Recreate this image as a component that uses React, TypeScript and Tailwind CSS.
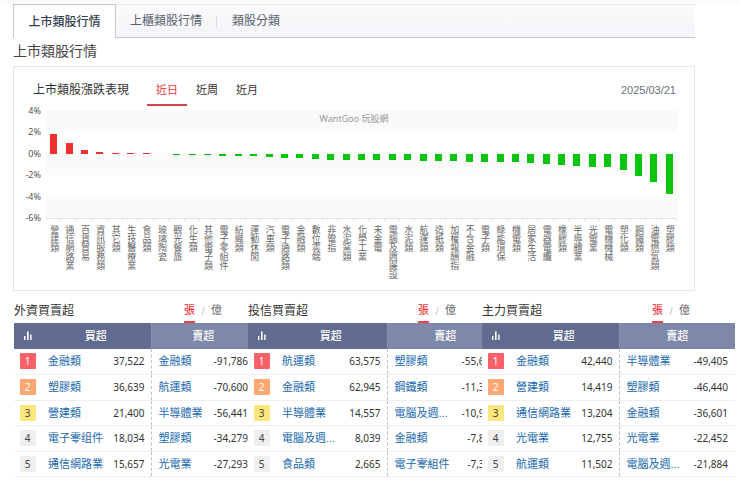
import React, { useState } from "react";
import clsx from "clsx";

const SECTORS: [string, number][] = [
  ["營建類", 1.82],
  ["通信網路業", 1.02],
  ["百貨貿易", 0.34],
  ["資訊服務類", 0.23],
  ["其它類", 0.12],
  ["生技醫療業", 0.07],
  ["食品類", 0.06],
  ["玻璃陶瓷", 0],
  ["觀光餐旅", -0.07],
  ["化生類", -0.12],
  ["其他電子類", -0.13],
  ["電子零組件", -0.14],
  ["紡織類", -0.22],
  ["運動休閒", -0.23],
  ["汽車類", -0.28],
  ["電子通路類", -0.35],
  ["金融類", -0.41],
  ["數位雲端", -0.45],
  ["非電指", -0.53],
  ["水泥窯類", -0.54],
  ["化學工業", -0.54],
  ["未金電", -0.59],
  ["電腦及週邊設", -0.6],
  ["水泥類", -0.6],
  ["航運類", -0.61],
  ["造紙類", -0.66],
  ["加權報酬指", -0.69],
  ["不含金融", -0.71],
  ["電子類", -0.75],
  ["綠能環保", -0.76],
  ["機電類", -0.77],
  ["居家生活", -0.8],
  ["電器電纜", -0.88],
  ["橡膠類", -0.98],
  ["半導體業", -1.1],
  ["光電業", -1.16],
  ["電機機械", -1.17],
  ["塑化類", -1.44],
  ["鋼鐵類", -2.0],
  ["油電燃氣類", -2.6],
  ["塑膠類", -3.66],
];

const PX_PER_PERCENT = 10.8;

type Row = [string, string, string, string];

type Board = {
  title: string;
  tableClass: string;
  buyNameClass: string;
  rows: Row[];
};

const BOARDS: Board[] = [
  {
    title: "外資買賣超",
    tableClass: "w-[241px]",
    buyNameClass: "w-[66px]",
    rows: [
      ["金融類", "37,522", "金融類", "-91,786"],
      ["塑膠類", "36,639", "航運類", "-70,600"],
      ["營建類", "21,400", "半導體業", "-56,441"],
      ["電子零组件", "18,034", "塑膠類", "-34,279"],
      ["通信網路業", "15,657", "光電業", "-27,293"],
    ],
  },
  {
    title: "投信買賣超",
    tableClass: "w-[255px]",
    buyNameClass: "w-[68px]",
    rows: [
      ["航運類", "63,575", "塑膠類", "-55,610"],
      ["金融類", "62,945", "鋼鐵類", "-11,312"],
      ["半導體業", "14,557", "電腦及週...", "-10,934"],
      ["電腦及週...", "8,039", "金融類", "-7,846"],
      ["食品類", "2,665", "電子零組件", "-7,325"],
    ],
  },
  {
    title: "主力買賣超",
    tableClass: "w-full",
    buyNameClass: "w-[66px]",
    rows: [
      ["金融類", "42,440", "半導體業", "-49,405"],
      ["營建類", "14,419", "塑膠類", "-46,440"],
      ["通信網路業", "13,204", "金融類", "-36,601"],
      ["光電業", "12,755", "光電業", "-22,452"],
      ["航運類", "11,502", "電腦及週...", "-21,884"],
    ],
  },
];

const RANK_COLORS = [
  "bg-[#fb6169] text-white",
  "bg-[#fda773] text-white",
  "bg-[#fde77c] text-[#444]",
  "bg-[#efefef] text-[#444]",
  "bg-[#efefef] text-[#444]",
];

function NavTabs() {
  return (
    <nav className="flex h-[34px] items-stretch border-t border-b border-t-[#e6e8ea] border-b-[#c6c9cd] bg-gradient-to-b from-[#fbfbfd] to-[#f3f4f7] text-[12px]">
      <a
        href="#listed"
        className="-my-px flex w-[103px] items-center justify-center border border-b-0 border-[#c6c9cd] bg-white font-medium text-[#34404f]"
      >
        上市類股行情
      </a>
      <a href="#otc" className="flex w-[100px] items-center justify-center text-[#56606d]">
        上櫃類股行情
      </a>
      <span className="h-[11px] w-px self-center bg-[#dcdfe3]" />
      <a href="#category" className="flex w-[78px] items-center justify-center text-[#56606d]">
        類股分類
      </a>
    </nav>
  );
}

function Bar({ value }: { value: number }) {
  const height = Math.abs(value) * PX_PER_PERCENT;
  return (
    <div className="flex h-[108px] flex-col items-center">
      <div className="flex h-[44px] w-[7px] shrink-0 items-end">
        {value > 0 && <div className="w-full bg-[#ee3030]" style={{ height }} />}
      </div>
      <div className="h-[64px] w-[7px]">
        {value < 0 && <div className="w-full bg-[#09c40d]" style={{ height }} />}
      </div>
    </div>
  );
}

function SectorChart() {
  return (
    <div className="relative flex pr-[17px] pb-[11px]">
      <div className="flex h-[117px] w-[27px] shrink-0 flex-col justify-between text-right font-['Noto_Sans'] text-[9px] leading-[10px] text-[#555]">
        {["4%", "2%", "0%", "-2%", "-4%", "-6%"].map((t) => (
          <span key={t}>{t}</span>
        ))}
      </div>
      <div className="min-w-0 flex-1 pt-[4px] pl-[5px]">
        <div className="grid grid-cols-[repeat(41,minmax(0,1fr))] bg-[linear-gradient(to_bottom,#fafafa_22px,#fff_22px,#fff_43px,#fafafa_43px,#fafafa_65px,#fff_65px,#fff_86px,#fafafa_86px,#fafafa_108px,#fff_108px)]">
          {SECTORS.map(([name, value]) => (
            <div key={name}>
              <Bar value={value} />
              <div className="h-[3px] border-t border-r border-[#e2e2e2]" />
              <div className="mt-[4px] flex h-[54px] justify-center">
                <span className="text-[9px] leading-[15px] whitespace-nowrap text-[#666] [writing-mode:vertical-rl]">
                  {name}
                </span>
              </div>
            </div>
          ))}
        </div>
      </div>
      <span className="absolute inset-x-0 top-[6px] text-center font-['Noto_Sans','Noto_Sans_CJK_TC',sans-serif] text-[9px] leading-[14px] text-[#999]">
        WantGoo 玩股網
      </span>
    </div>
  );
}

function ChartCard() {
  const [period, setPeriod] = useState("近日");
  return (
    <section className="border border-[#e4e6e8] bg-white">
      <header className="flex h-[39px] items-stretch pr-[18px] pl-[19px] text-[#333]">
        <h2 className="flex items-center pt-[7px] text-[12px]">上市類股漲跌表現</h2>
        <div className="ml-[18px] flex text-[11px]">
          {["近日", "近周", "近月"].map((p) => (
            <button
              key={p}
              type="button"
              onClick={() => setPeriod(p)}
              className={clsx(
                "w-[40px] border-b-2 pt-[9px]",
                p === period ? "border-[#d8454a] text-[#e8353b]" : "border-transparent",
              )}
            >
              {p}
            </button>
          ))}
        </div>
        <time className="ml-auto flex items-center pt-[7px] font-['Liberation_Sans'] text-[11px] text-[#6b7078]">
          2025/03/21
        </time>
      </header>
      <SectorChart />
    </section>
  );
}

function BarsIcon() {
  return (
    <svg viewBox="0 0 8 10" className="mx-auto h-[10px] w-[8px]" fill="#fff" aria-hidden="true">
      <rect x="0" y="5" width="1.4" height="4" />
      <rect x="3" y="0.5" width="1.6" height="8.5" />
      <rect x="6.2" y="3.5" width="1.4" height="5.5" />
    </svg>
  );
}

function BoardTable({ board }: { board: Board }) {
  const [unit, setUnit] = useState("張");
  return (
    <section className="min-w-0 overflow-hidden">
      <header className="flex h-[32px] w-[208px] items-stretch">
        <h2 className="mr-auto flex items-center pt-[8px] text-[12px] text-[#333]">{board.title}</h2>
        {["張", "億"].map((u, i) => (
          <React.Fragment key={u}>
            {i > 0 && (
              <span className="flex w-[16px] items-center justify-center pt-[8px] text-[11px] text-[#c4c4c4]">/</span>
            )}
            <button
              type="button"
              onClick={() => setUnit(u)}
              className={clsx(
                "border-b-2 pt-[9px] text-[11px]",
                u === unit ? "border-[#ef4348] font-medium text-[#ef4348]" : "border-transparent text-[#666]",
              )}
            >
              {u}
            </button>
          </React.Fragment>
        ))}
      </header>
      <table className={clsx("table-fixed border-collapse text-[11px]", board.tableClass)}>
        <colgroup>
          <col className="w-[27px]" />
          <col className={board.buyNameClass} />
          <col className="w-[44px]" />
          <col />
          <col className="w-[43px]" />
        </colgroup>
        <thead>
          <tr className="h-[26px] bg-[#616b8f] text-white">
            <th className="p-0">
              <BarsIcon />
            </th>
            <th colSpan={2} className="p-0 font-medium">
              買超
            </th>
            <th colSpan={2} className="border-l border-dashed border-[#8f97b3] bg-[#7f88a8] p-0 font-medium">
              賣超
            </th>
          </tr>
        </thead>
        <tbody>
          {board.rows.map(([buyName, buy, sellName, sell], i) => (
            <tr
              key={i}
              className="h-[25px] border-b border-[#efefef] leading-[16px] even:h-[26px]"
            >
              <td className="p-0">
                <span
                  className={clsx(
                    "mx-auto block h-[16px] w-[16px] rounded-[1px] text-center font-['Noto_Sans'] text-[10px] leading-[16px]",
                    RANK_COLORS[i],
                  )}
                >
                  {i + 1}
                </span>
              </td>
              <td className="p-0 pl-[7px] whitespace-nowrap">
                <a href="#sector" className="text-[#2068ae]">
                  {buyName}
                </a>
              </td>
              <td className="p-0 pr-[6px] text-right font-['Noto_Sans'] text-[10px] text-[#333]">{buy}</td>
              <td className="border-l border-dashed border-[#c0c0c0] p-0 pl-[7px] whitespace-nowrap">
                <a href="#sector" className="text-[#2068ae]">
                  {sellName}
                </a>
              </td>
              <td className="p-0 pr-[7px] text-right font-['Noto_Sans'] text-[10px] text-[#333]">{sell}</td>
            </tr>
          ))}
        </tbody>
      </table>
    </section>
  );
}

export default function App() {
  return (
    <main className="bg-white pb-[9px] font-['Liberation_Sans','Noto_Sans_CJK_TC',sans-serif]">
      <div className="h-[4px] bg-[#fafafa]" />
      <div className="pr-[45px] pl-[13px]">
        <NavTabs />
        <h1 className="pt-[3px] pb-[4px] text-[14px] leading-[21px] text-[#444]">上市類股行情</h1>
        <ChartCard />
      </div>
      <div className="grid grid-cols-[234fr_234fr_253fr] pr-[5px] pl-[14px]">
        {BOARDS.map((b) => (
          <BoardTable key={b.title} board={b} />
        ))}
      </div>
    </main>
  );
}
